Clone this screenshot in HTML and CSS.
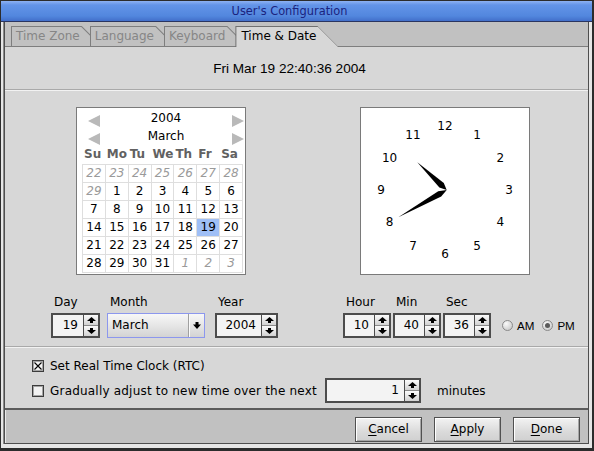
FILE: index.html
```html
<!DOCTYPE html>
<html>
<head>
<meta charset="utf-8">
<title>User's Configuration</title>
<link rel="stylesheet" href="styles.css">
</head>
<body>
<div class="window">
  <div class="titlebar"><span class="title">User's Configuration</span></div>
  <div class="client">
    <div class="tabs">
      <div class="tab"><span>Time Zone</span></div>
      <div class="tab"><span>Language</span></div>
      <div class="tab"><span>Keyboard</span></div>
      <div class="tab active"><span>Time &amp; Date</span></div>
    </div>
    <div class="panel">
      <div class="now">Fri Mar 19 22:40:36 2004</div>
      <div class="sep"></div>
      <div class="widgets">
        <div class="calendar">
          <div class="cal-nav"><i class="arr left"></i><span>2004</span><i class="arr right"></i></div>
          <div class="cal-nav"><i class="arr left"></i><span>March</span><i class="arr right"></i></div>
          <div class="cal-head"><span>Su</span><span>Mo</span><span>Tu</span><span>We</span><span>Th</span><span>Fr</span><span>Sa</span></div>
          <div class="cal-grid">
            <span class="o">22</span><span class="o">23</span><span class="o">24</span><span class="o">25</span><span class="o">26</span><span class="o">27</span><span class="o">28</span>
            <span class="o">29</span><span>1</span><span>2</span><span>3</span><span>4</span><span>5</span><span>6</span>
            <span>7</span><span>8</span><span>9</span><span>10</span><span>11</span><span>12</span><span>13</span>
            <span>14</span><span>15</span><span>16</span><span>17</span><span>18</span><span class="sel">19</span><span>20</span>
            <span>21</span><span>22</span><span>23</span><span>24</span><span>25</span><span>26</span><span>27</span>
            <span>28</span><span>29</span><span>30</span><span>31</span><span class="o">1</span><span class="o">2</span><span class="o">3</span>
          </div>
        </div>
        <div class="clock">
          <svg width="168" height="166" viewBox="0 0 168 166">
            <text x="84" y="22.4">12</text>
            <text x="116" y="31">1</text>
            <text x="139.4" y="54.4">2</text>
            <text x="148" y="86.4">3</text>
            <text x="139.4" y="118.4">4</text>
            <text x="116" y="141.8">5</text>
            <text x="84" y="150.4">6</text>
            <text x="52" y="141.8">7</text>
            <text x="28.6" y="118.4">8</text>
            <text x="20" y="86.4">9</text>
            <text x="28.6" y="54.4">10</text>
            <text x="52" y="31">11</text>
            <polygon points="85.7,82 82.8,74.9 56.3,54.3 78.4,79.5" fill="#000"/>
            <polygon points="85.7,82 80.2,88.5 37.3,109.3 77.2,83.3" fill="#000"/>
          </svg>
        </div>
      </div>
      <div class="fields">
        <div class="group g-day">
          <div class="lbl">Day</div>
          <div class="spin w49"><span class="val">19</span><span class="btns"><i><svg width="9" height="6" viewBox="0 0 9 6"><path d="M4.5 0L9 4H6V6H3V4H0Z"/></svg></i><i><svg width="9" height="6" viewBox="0 0 9 6"><path d="M3 0H6V2H9L4.5 6L0 2H3Z"/></svg></i></span></div>
        </div>
        <div class="group g-month">
          <div class="lbl">Month</div>
          <div class="combo"><span class="cval">March</span><span class="cbtn"><svg width="8" height="7" viewBox="0 0 8 7"><path d="M2.5 0H5.5V2.5H8L4 7L0 2.5H2.5Z"/></svg></span></div>
        </div>
        <div class="group g-year">
          <div class="lbl">Year</div>
          <div class="spin w63"><span class="val">2004</span><span class="btns"><i><svg width="9" height="6" viewBox="0 0 9 6"><path d="M4.5 0L9 4H6V6H3V4H0Z"/></svg></i><i><svg width="9" height="6" viewBox="0 0 9 6"><path d="M3 0H6V2H9L4.5 6L0 2H3Z"/></svg></i></span></div>
        </div>
        <div class="group g-hour">
          <div class="lbl">Hour</div>
          <div class="spin w48"><span class="val">10</span><span class="btns"><i><svg width="9" height="6" viewBox="0 0 9 6"><path d="M4.5 0L9 4H6V6H3V4H0Z"/></svg></i><i><svg width="9" height="6" viewBox="0 0 9 6"><path d="M3 0H6V2H9L4.5 6L0 2H3Z"/></svg></i></span></div>
        </div>
        <div class="group g-min">
          <div class="lbl">Min</div>
          <div class="spin w48"><span class="val">40</span><span class="btns"><i><svg width="9" height="6" viewBox="0 0 9 6"><path d="M4.5 0L9 4H6V6H3V4H0Z"/></svg></i><i><svg width="9" height="6" viewBox="0 0 9 6"><path d="M3 0H6V2H9L4.5 6L0 2H3Z"/></svg></i></span></div>
        </div>
        <div class="group g-sec">
          <div class="lbl">Sec</div>
          <div class="spin w48"><span class="val">36</span><span class="btns"><i><svg width="9" height="6" viewBox="0 0 9 6"><path d="M4.5 0L9 4H6V6H3V4H0Z"/></svg></i><i><svg width="9" height="6" viewBox="0 0 9 6"><path d="M3 0H6V2H9L4.5 6L0 2H3Z"/></svg></i></span></div>
        </div>
        <div class="ampm">
          <span class="radio"></span><span class="rtext">AM</span>
          <span class="radio on"></span><span class="rtext">PM</span>
        </div>
      </div>
      <div class="sep sep2"></div>
      <div class="check c1">
        <span class="box"><svg width="10" height="10" viewBox="0 0 10 10"><path d="M1.5 1.5L8.5 8.5M8.5 1.5L1.5 8.5" stroke="#000" stroke-width="1.1"/></svg></span>
        <span>Set Real Time Clock (RTC)</span>
      </div>
      <div class="check c2">
        <span class="box"></span>
        <span class="ctext">Gradually adjust to new time over the next</span>
        <div class="spin w96"><span class="val">1</span><span class="btns"><i><svg width="9" height="6" viewBox="0 0 9 6"><path d="M4.5 0L9 4H6V6H3V4H0Z"/></svg></i><i><svg width="9" height="6" viewBox="0 0 9 6"><path d="M3 0H6V2H9L4.5 6L0 2H3Z"/></svg></i></span></div>
        <span class="unit">minutes</span>
      </div>
    </div>
    <div class="buttons">
      <div class="btn"><u>C</u>ancel</div>
      <div class="btn"><u>A</u>pply</div>
      <div class="btn"><u>D</u>one</div>
    </div>
  </div>
</div>
</body>
</html>
```

FILE: styles.css
```css
* { box-sizing: border-box; }
html, body { margin: 0; padding: 0; }
body {
  width: 594px;
  height: 451px;
  overflow: hidden;
  background: #fff;
  font-family: "DejaVu Sans", sans-serif;
  font-size: 12px;
  color: #000;
}
.window {
  width: 594px;
  height: 451px;
  border-style: solid;
  border-color: #2c2c2c;
  border-width: 1px 2px 3px 1px;
  background: #e6e6e6;
  padding: 0 3px 4px 3px;
  display: flex;
  flex-direction: column;
}
.titlebar {
  margin: 0 -3px;
  height: 21px;
  flex: none;
  border-bottom: 1px solid #2a3560;
  background: linear-gradient(#8db2f3, #6394e8 20%, #5287de 75%, #426fca);
  display: flex;
  justify-content: center;
  padding: 1px 14px 0 0;
}
.title { color: #1b237e; font-size: 11.4px; line-height: 19px; }
.client {
  flex: 1;
  border: 1px solid #4e4e4e;
  border-top: 0;
  box-shadow: -1px 0 0 #8a8a8a;
  display: flex;
  flex-direction: column;
  background: #c1c1c1;
}
/* tabs */
.tabs {
  height: 24px;
  flex: none;
  display: flex;
  align-items: flex-start;
  padding: 4px 0 0 6px;
}
.tab {
  height: 20px;
  background: #7e7e7e;
  padding: 1px 0 0 1px;
  margin-right: -12px;
  clip-path: polygon(0 0, calc(100% - 20px) 0, 100% 100%, 0 100%);
}
.tab span {
  display: block;
  height: 19px;
  line-height: 19px;
  padding: 0 22px 0 4px;
  color: #868686;
  background: #c1c1c1;
  clip-path: polygon(0 0, calc(100% - 20.4px) 0, calc(100% - 1.4px) 100%, 0 100%);
}
.tab.active {
  height: 21px;
  position: relative;
  z-index: 2;
  background: #707070;
  clip-path: polygon(0 0, calc(100% - 21px) 0, 100% 100%, 0 100%);
}
.tab.active span {
  height: 20px;
  color: #000;
  background: #d7d7d7;
  padding-left: 5px;
  clip-path: polygon(0 0, calc(100% - 20.4px) 0, calc(100% - 0.4px) 100%, 0 100%);
}
/* panel */
.panel {
  height: 364px;
  flex: none;
  background: #d7d7d7;
  border-top: 1px solid #7e7e7e;
  border-bottom: 2px solid #5c5c5c;
}
.now {
  height: 42px;
  padding: 14px 14px 0 0;
  line-height: 15px;
  text-align: center;
  font-family: "Liberation Sans", sans-serif;
  font-size: 13.6px;
}
.sep {
  height: 2px;
  border-top: 1px solid #a9a9a9;
  border-bottom: 1px solid #f2f2f2;
}
.sep2 { margin-top: 8px; }
.widgets {
  display: flex;
  margin-top: 16px;
  padding-left: 71px;
  gap: 114px;
}
/* calendar */
.calendar {
  width: 170px;
  height: 168px;
  border: 1px solid #7a7a7a;
  background: #fff;
  padding: 1px 0 0 5px;
}
.cal-nav {
  height: 18px;
  display: flex;
  align-items: flex-start;
  padding: 0 1px 0 6px;
}
.cal-nav span {
  flex: 1;
  text-align: center;
  line-height: 18px;
}
.arr {
  width: 0;
  height: 0;
  margin-top: 6px;
  border-top: 6px solid transparent;
  border-bottom: 6px solid transparent;
}
.arr.left { border-right: 12px solid #b9b9b9; }
.arr.right { border-left: 12px solid #b9b9b9; }
.cal-head {
  width: 161px;
  height: 19px;
  display: grid;
  grid-template-columns: repeat(7, 1fr);
  padding-left: 1px;
  font-weight: bold;
  color: #616161;
  line-height: 19px;
}
.cal-head span { padding-left: 1px; white-space: nowrap; }
.cal-grid {
  width: 161px;
  display: grid;
  grid-template-columns: repeat(7, 1fr);
  border-top: 1px solid #dedede;
  border-left: 1px solid #dedede;
}
.cal-grid span {
  height: 18px;
  line-height: 17px;
  text-align: center;
  border-right: 1px solid #dedede;
  border-bottom: 1px solid #dedede;
}
.cal-grid .o { color: #9a9a9a; font-style: italic; }
.cal-grid .sel { background: #9fbff6; }
/* clock */
.clock {
  width: 170px;
  height: 168px;
  border: 1px solid #7a7a7a;
  background: #fff;
}
.clock svg { display: block; }
.clock text {
  font-family: "DejaVu Sans", sans-serif;
  font-size: 12px;
  text-anchor: middle;
  fill: #000;
}
/* fields */
.fields {
  display: flex;
  align-items: flex-end;
  margin-top: 20px;
  padding-left: 46px;
}
.lbl {
  height: 14px;
  line-height: 14px;
  margin-bottom: 4px;
  padding-left: 3px;
}
.g-month { margin-left: 7px; }
.g-year { margin-left: 10px; }
.g-hour { margin-left: 65px; }
.g-min, .g-sec { margin-left: 2px; }
.spin {
  height: 25px;
  display: flex;
  border: 2px solid #4c4c4c;
  background: #f3f3f3;
}
.w49 { width: 49px; }
.w48 { width: 48px; }
.w63 { width: 63px; }
.w96 { width: 96px; }
.val {
  flex: 1;
  text-align: right;
  padding-right: 5px;
  line-height: 21px;
}
.btns {
  width: 15px;
  border-left: 1px solid #4c4c4c;
  display: flex;
  flex-direction: column;
}
.btns i {
  flex: 1;
  display: flex;
  align-items: center;
  justify-content: center;
  background: linear-gradient(#fbfbfb, #d2d2d2);
}
.btns i + i { border-top: 1px solid #8a8a8a; }
.btns svg { display: block; }
.combo {
  width: 98px;
  height: 25px;
  display: flex;
  border: 1px solid #8c97ee;
  background: linear-gradient(#f7f7f7, #e6e6e6 50%, #d3d3d3);
}
.cval {
  flex: 1;
  line-height: 23px;
  padding-left: 4px;
}
.cbtn {
  width: 16px;
  border-left: 1px solid #a0a0a0;
  box-shadow: inset 1px 0 0 #fafafa;
  display: flex;
  align-items: center;
  justify-content: center;
}
.cbtn svg { display: block; }
.ampm {
  display: flex;
  align-items: center;
  height: 25px;
  margin-left: 11px;
  font-family: "Liberation Sans", sans-serif;
  font-size: 11.6px;
}
.radio {
  width: 11px;
  height: 11px;
  border-radius: 50%;
  border: 1px solid #8a8a8a;
  background: radial-gradient(circle at 35% 30%, #fafafa, #cfcfcf 75%);
  display: flex;
  align-items: center;
  justify-content: center;
  margin-right: 4px;
}
.radio.on::after {
  content: "";
  width: 5px;
  height: 5px;
  border-radius: 50%;
  background: #5a5a5a;
}
.rtext { margin-right: 8px; }
/* checks */
.check {
  display: flex;
  align-items: center;
  padding-left: 27px;
}
.c1 { height: 16px; margin-top: 10px; }
.c2 { height: 25px; margin-top: 4px; }
.box {
  width: 12px;
  height: 12px;
  flex: none;
  border: 1px solid #3c3c3c;
  background: #f2f2f2;
  box-shadow: inset 0 0 0 1px #a5a5a5;
  margin-right: 6px;
  display: flex;
  align-items: center;
  justify-content: center;
}
.box svg { display: block; }
.ctext { width: 275px; white-space: nowrap; letter-spacing: 0.2px; }
.unit { margin-left: 16px; }
/* buttons */
.buttons {
  flex: 1;
  display: flex;
  justify-content: flex-end;
  align-items: flex-start;
  gap: 12px;
  padding: 7px 8px 0 0;
  border-left: 1px solid #e9e9e9;
  background: #c1c1c1;
}
.btn {
  width: 67px;
  height: 25px;
  border: 1px solid #505050;
  background: linear-gradient(#f3f3f3, #dadada 60%, #d0d0d0);
  box-shadow: inset 1px 1px 0 #ffffff, inset -1px -1px 0 #a6a6a6;
  text-align: center;
  line-height: 23px;
}
.btn u { text-decoration-thickness: 1px; text-underline-offset: 2px; }
```
